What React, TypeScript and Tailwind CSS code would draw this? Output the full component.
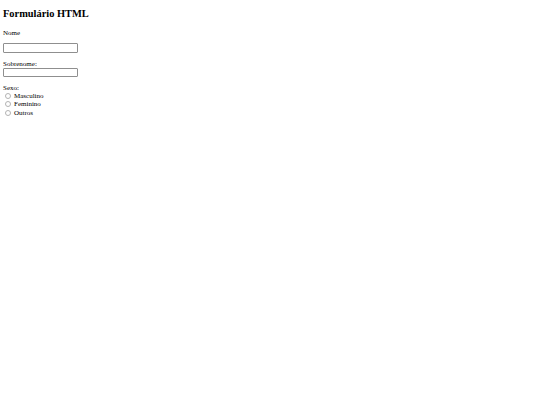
export default function App() {
  const font = { fontFamily: '"Liberation Serif", "Times New Roman", serif' };
  return (
    <div className="min-h-[405px] w-[540px] bg-white text-black px-[3px]" style={font}>
      <h2 className="pt-[8px] text-[10.4px] font-bold leading-[12px]">Formulário HTML</h2>
      <div className="mt-[8.5px] text-[7px] leading-[8px]">Nome</div>
      <div className="mt-[6.5px] h-[9.5px] w-[75px] rounded-[1px] border border-[#8f8f8f] bg-white" />
      <div className="mt-[7px] text-[7px] leading-[8px]">Sobrenome:</div>
      <div className="h-[9.5px] w-[75px] rounded-[1px] border border-[#8f8f8f] bg-white" />
      <div className="mt-[6.5px] text-[7px] leading-[8px]">Sexo:</div>
      <div className="flex flex-col text-[7px] leading-[8.5px]">
        {["Masculino", "Feminino", "Outros"].map((s) => (
          <div key={s} className="flex items-center">
            <span className="ml-[2px] mr-[3px] inline-block h-[6px] w-[6px] rounded-full border border-[#b3b3b3] bg-white" />
            <span>{s}</span>
          </div>
        ))}
      </div>
    </div>
  );
}
